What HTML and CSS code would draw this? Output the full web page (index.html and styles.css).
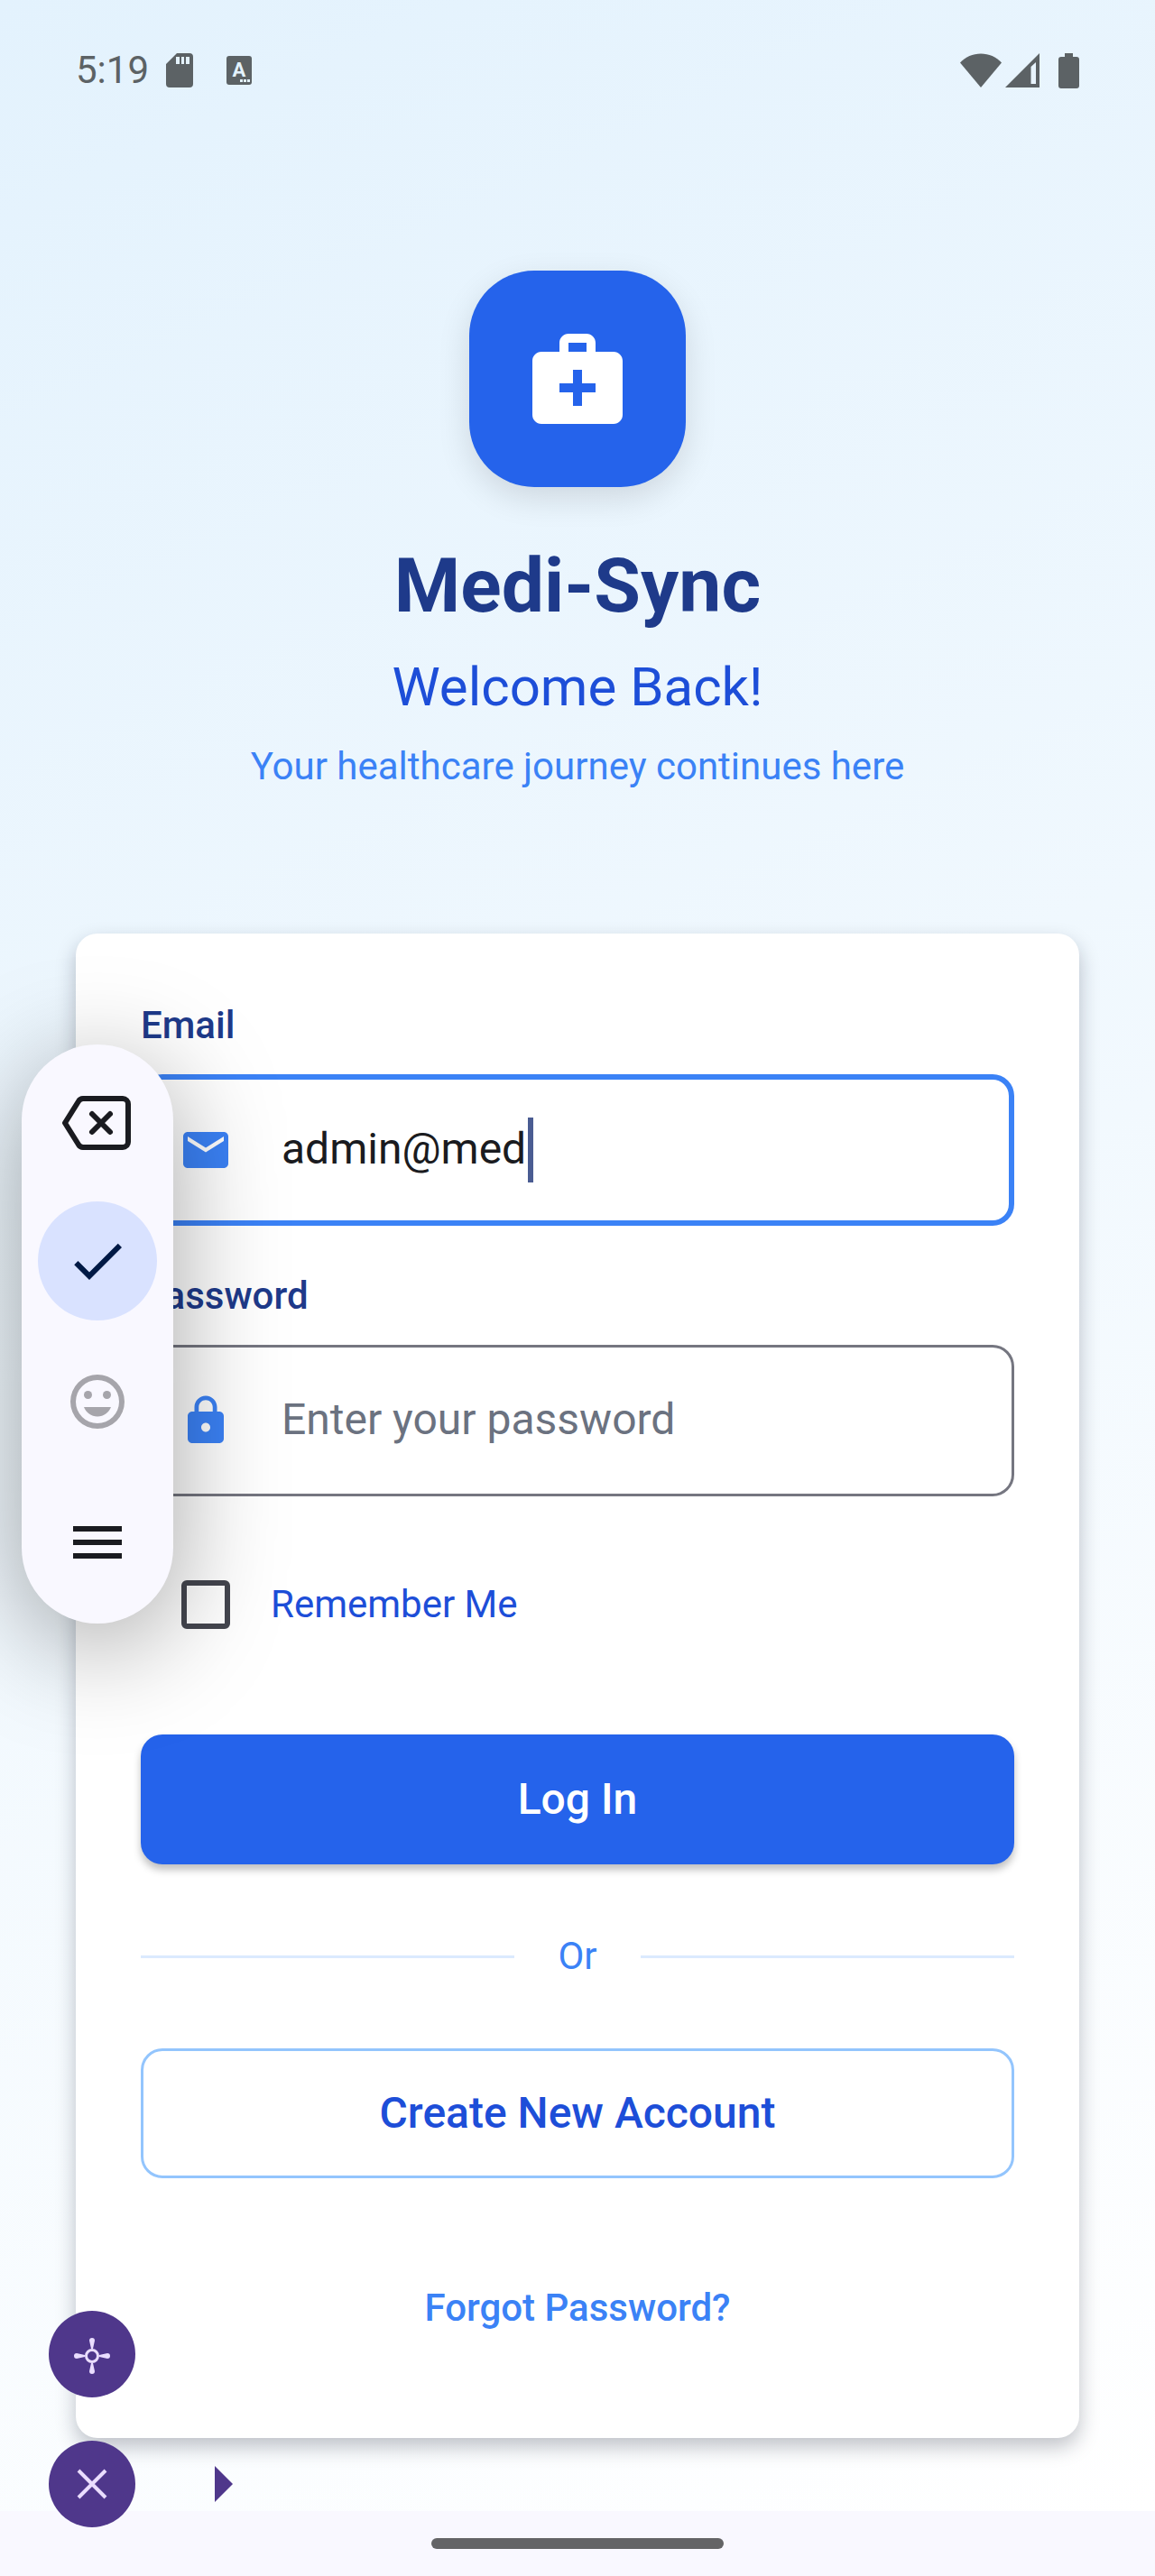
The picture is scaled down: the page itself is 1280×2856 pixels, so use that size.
FILE: index.html
```html
<!DOCTYPE html>
<html lang="en">
<head>
<meta charset="utf-8">
<meta name="viewport" content="width=device-width, initial-scale=1">
<title>Medi-Sync – Log In</title>
<link rel="stylesheet" href="styles.css">
</head>
<body>
<div class="screen">
  <header class="status-bar">
    <div class="status-group">
      <time class="clock">5:19</time>
      <svg class="status-sd" viewBox="0 0 30 38" aria-hidden="true"><path fill-rule="evenodd" d="M12 0H26a4 4 0 0 1 4 4V34a4 4 0 0 1-4 4H4a4 4 0 0 1-4-4V12ZM11 4V12H15V4ZM17 4V12H20V4ZM22 4V12H26V4Z"/></svg>
      <svg class="status-lang" viewBox="0 0 28 32" aria-hidden="true"><rect width="28" height="32" rx="3"/><text class="status-letter" x="14" y="23" text-anchor="middle">A</text><path class="status-dots" d="M15 26h3v3h-3zM19 26h3v3h-3zM23 26h3v3h-3z"/></svg>
    </div>
    <div class="status-group status-group-end">
      <svg class="status-wifi" viewBox="0 0 46 38" aria-hidden="true"><path d="M0 10.500C6 4 14 .5 23 .5S40 4 46 10.500L23 38Z"/></svg>
      <svg class="status-signal" viewBox="0 0 38 38" aria-hidden="true"><path fill-rule="evenodd" d="M38 0V38H0ZM34 10L28.500 15V34H34Z"/></svg>
      <svg class="status-battery" viewBox="0 0 23 39" aria-hidden="true"><path d="M7 0H16V4H20a3 3 0 0 1 3 3V36a3 3 0 0 1-3 3H3a3 3 0 0 1-3-3V7a3 3 0 0 1 3-3H7Z"/></svg>
    </div>
  </header>

  <main class="content">
    <section class="brand">
      <div class="logo">
        <svg class="logo-icon" viewBox="0 0 24 24" aria-hidden="true"><path fill-rule="evenodd" d="M20 6H16V4c0-1.100-.9-2-2-2H10C8.900 2 8 2.900 8 4V6H4C2.900 6 2 6.900 2 8V20c0 1.100.9 2 2 2H20c1.100 0 2-.9 2-2V8c0-1.100-.9-2-2-2ZM10 4H14V6H10ZM16 15H13V18H11V15H8V13H11V10H13V13H16Z"/></svg>
      </div>
      <h1 class="brand-name">Medi-Sync</h1>
      <p class="brand-welcome">Welcome Back!</p>
      <p class="brand-tagline">Your healthcare journey continues here</p>
    </section>

    <form class="card">
      <div class="field-group">
        <label class="label" for="email">Email</label>
        <div class="field field-focused">
          <svg class="field-icon" viewBox="0 0 24 24" aria-hidden="true"><path d="M20 4H4c-1.100 0-1.990.9-1.990 2L2 18c0 1.100.9 2 2 2h16c1.100 0 2-.9 2-2V6c0-1.100-.9-2-2-2zm0 4l-8 5-8-5V6l8 5 8-5v2z"/></svg>
          <input class="input input-sized" id="email" type="text" value="admin@med">
          <span class="caret"></span>
        </div>
      </div>
      <div class="field-group">
        <label class="label" for="password">Password</label>
        <div class="field">
          <svg class="field-icon" viewBox="0 0 24 24" aria-hidden="true"><path d="M18 8h-1V6c0-2.760-2.240-5-5-5S7 3.240 7 6v2H6c-1.100 0-2 .9-2 2v10c0 1.100.9 2 2 2h12c1.100 0 2-.9 2-2V10c0-1.100-.9-2-2-2zm-6 9c-1.100 0-2-.9-2-2s.9-2 2-2 2 .9 2 2-.9 2-2 2zm3.100-9H8.900V6c0-1.710 1.390-3.100 3.100-3.100s3.100 1.390 3.100 3.100v2z"/></svg>
          <input class="input" id="password" type="password" placeholder="Enter your password">
        </div>
      </div>
      <div class="remember">
        <span class="remember-target"><input class="checkbox" id="remember" type="checkbox"></span>
        <label class="remember-label" for="remember">Remember Me</label>
      </div>
      <div class="actions">
        <button class="button button-primary" type="submit">Log In</button>
        <div class="divider"><span class="divider-text">Or</span></div>
        <button class="button button-outline" type="button">Create New Account</button>
        <a class="forgot" href="#">Forgot Password?</a>
      </div>
    </form>
  </main>
</div>

<footer class="nav-bar"><div class="nav-handle"></div></footer>

<aside class="toolbar" aria-label="Keyboard toolbar">
  <button class="tool" type="button" aria-label="Backspace">
    <svg class="tool-icon tool-icon-wide" viewBox="0 0 80 72"><g transform="translate(0 9)"><path class="stroke-round" d="M24 3H68a6 6 0 0 1 6 6V51a6 6 0 0 1-6 6H24a6 6 0 0 1-5-3L4 30L19 6a6 6 0 0 1 5-3Z"/><path class="stroke-round" d="M34 20L54 40M54 20L34 40"/></g></svg>
  </button>
  <button class="tool tool-active" type="button" aria-label="Done">
    <svg class="tool-icon" viewBox="0 0 24 24"><path d="M9 16.170L4.830 12l-1.420 1.410L9 19 21 7l-1.410-1.410z"/></svg>
  </button>
  <button class="tool tool-muted" type="button" aria-label="Emoji">
    <svg class="tool-icon" viewBox="0 0 24 24"><path fill-rule="evenodd" d="M12 2a10 10 0 1 0 0 20a10 10 0 0 0 0-20ZM12 4a8 8 0 1 1 0 16a8 8 0 0 1 0-16Z"/><circle cx="8.500" cy="9.500" r="1.500"/><circle cx="15.500" cy="9.500" r="1.500"/><path d="M7 14H17c-.8 2.100-2.700 3.500-5 3.500S7.800 16.100 7 14Z"/></svg>
  </button>
  <button class="tool" type="button" aria-label="Menu">
    <svg class="tool-icon" viewBox="0 0 24 24"><path d="M3 18h18v-2H3v2zm0-5h18v-2H3v2zm0-7v2h18V6H3z"/></svg>
  </button>
</aside>

<aside class="assist" aria-label="Pointer controls">
  <button class="assist-button" type="button" aria-label="Move">
    <svg class="assist-icon" viewBox="0 -2 40 40"><path d="M19 12L17 3a3 3 0 0 1 6 0L21 12ZM19 28L17 37a3 3 0 0 0 6 0L21 28ZM12 19L3 17a3 3 0 0 0 0 6L12 21ZM28 19L37 17a3 3 0 0 1 0 6L28 21Z"/><circle class="assist-ring" cx="20" cy="20" r="6.500"/></svg>
  </button>
  <div class="assist-row">
    <button class="assist-button" type="button" aria-label="Close">
      <svg class="assist-icon" viewBox="0 0 40 40"><path class="assist-cross" d="M5 5L35 35M35 5L5 35"/></svg>
    </button>
    <button class="assist-expand" type="button" aria-label="Expand">
      <svg class="assist-arrow" viewBox="0 0 20 40"><path d="M0 0L20 20L0 40Z"/></svg>
    </button>
  </div>
</aside>
</body>
</html>
```
FILE: styles.css
```css
*,
*::before,
*::after {
  box-sizing: border-box;
}

body {
  position: relative;
  display: flex;
  flex-direction: column;
  min-height: 100vh;
  margin: 0;
  font-family: Roboto, "Liberation Sans", sans-serif;
  font-size: 42px;
  line-height: 60px;
}

button,
input {
  margin: 0;
  padding: 0;
  border: 0;
  background: none;
  font: inherit;
}

svg {
  display: block;
  flex: none;
  overflow: visible;
  fill: currentColor;
}

.screen {
  flex: 1;
  background: linear-gradient(155deg, #e3f2fd, #ffffff);
}

/* Status bar */
.status-bar {
  display: flex;
  align-items: center;
  justify-content: space-between;
  height: 156px;
  padding: 0 84px;
  color: #5c6265;
}

.status-group {
  display: flex;
  align-items: center;
}

.status-group-end {
  gap: 4px;
}

.status-sd {
  width: 30px;
  height: 38px;
  margin-left: 19px;
}

.status-lang {
  width: 28px;
  height: 32px;
  margin-left: 37px;
}

.status-letter {
  fill: #e3f2fd;
  font-size: 22px;
  font-weight: 700;
}

.status-dots {
  fill: #e3f2fd;
}

.status-wifi {
  width: 46px;
  height: 38px;
}

.status-signal {
  width: 38px;
  height: 38px;
}

.status-battery {
  width: 23px;
  height: 39px;
  margin-left: 17px;
}

/* Brand */
.content {
  padding: 144px 84px 81px;
}

.brand {
  display: flex;
  flex-direction: column;
  align-items: center;
  gap: 16px;
  text-align: center;
}

.logo {
  display: grid;
  place-items: center;
  width: 240px;
  height: 240px;
  margin-bottom: 40px;
  border-radius: 72px;
  background: #2563eb;
  color: #ffffff;
  box-shadow: 0 12px 36px rgba(0, 0, 0, 0.12);
}

.logo-icon {
  width: 120px;
  height: 120px;
}

.brand-name {
  margin: 0;
  color: #1e3a8a;
  font-size: 84px;
  font-weight: 700;
  line-height: 108px;
}

.brand-welcome {
  margin: 0;
  color: #1d4ed8;
  font-size: 60px;
  line-height: 84px;
}

.brand-tagline {
  margin: 0;
  color: #3b82f6;
}

/* Card */
.card {
  display: flex;
  flex-direction: column;
  gap: 48px;
  margin-top: 155px;
  padding: 72px;
  border-radius: 24px;
  background: #ffffff;
  box-shadow: 0 10px 22px rgba(15, 23, 42, 0.26);
}

.field-group {
  display: flex;
  flex-direction: column;
  gap: 24px;
}

.label {
  color: #1e3a8a;
  font-weight: 500;
}

.field {
  display: flex;
  align-items: center;
  height: 168px;
  padding: 0 42px;
  border-radius: 24px;
  box-shadow: inset 0 0 0 3px #757680;
}

.field-focused {
  box-shadow: inset 0 0 0 6px #3b82f6;
}

.field-icon {
  width: 60px;
  height: 60px;
  margin-right: 54px;
  color: #3b82f6;
}

.input {
  flex: 1;
  min-width: 0;
  height: 72px;
  padding-bottom: 4px;
  outline: 0;
  color: #1a1b20;
  font-size: 48px;
}

.input::placeholder {
  color: #6b7280;
  opacity: 1;
}

.input-sized {
  flex: none;
  field-sizing: content;
}

.caret {
  width: 6px;
  height: 72px;
  margin-left: 2px;
  background: #4a5c92;
}

.remember {
  display: flex;
  align-items: center;
  height: 144px;
}

.remember-target {
  display: grid;
  place-items: center;
  width: 144px;
  height: 144px;
}

.checkbox {
  appearance: none;
  width: 54px;
  height: 54px;
  border: 6px solid #44464f;
  border-radius: 6px;
}

.remember-label {
  color: #1d4ed8;
}

.actions {
  display: flex;
  flex-direction: column;
  gap: 72px;
  padding-top: 24px;
}

.button {
  height: 144px;
  border-radius: 24px;
  font-size: 48px;
  font-weight: 500;
}

.button-primary {
  background: #2563eb;
  color: #ffffff;
  box-shadow: 0 6px 9px rgba(0, 0, 0, 0.25);
}

.button-outline {
  border: 3px solid #93c5fd;
  color: #1d4ed8;
}

.divider {
  display: flex;
  align-items: center;
  gap: 48px;
  color: #3b82f6;
}

.divider::before,
.divider::after {
  content: "";
  flex: 1;
  height: 3px;
  background: #dbeafe;
}

.forgot {
  display: flex;
  align-items: center;
  justify-content: center;
  height: 144px;
  color: #3b82f6;
  font-weight: 500;
  text-decoration: none;
}

/* Gesture navigation */
.nav-bar {
  display: grid;
  place-items: center;
  height: 72px;
  background: #f9f8ff;
}

.nav-handle {
  width: 324px;
  height: 12px;
  border-radius: 6px;
  background: #646466;
}

/* Floating keyboard toolbar */
.toolbar {
  position: absolute;
  top: 1158px;
  left: 24px;
  display: flex;
  flex-direction: column;
  align-items: center;
  gap: 24px;
  width: 168px;
  padding: 18px 0 24px;
  border-radius: 84px;
  background: #f9f8ff;
  box-shadow: 0 24px 120px rgba(0, 0, 0, 0.36);
}

.tool {
  display: grid;
  place-items: center;
  width: 132px;
  height: 132px;
  border-radius: 50%;
  color: #1a1b20;
}

.tool-active {
  background: #d9e2ff;
  color: #001945;
}

.tool-muted {
  color: #a6a5ab;
}

.tool-icon {
  width: 72px;
  height: 72px;
}

.tool-icon-wide {
  width: 80px;
}

.stroke-round {
  fill: none;
  stroke: currentColor;
  stroke-width: 6;
  stroke-linecap: round;
  stroke-linejoin: round;
}

/* Floating pointer controls */
.assist {
  position: absolute;
  bottom: 54px;
  left: 54px;
  display: flex;
  flex-direction: column;
  gap: 48px;
}

.assist-row {
  display: flex;
  align-items: center;
  gap: 88px;
}

.assist-button {
  display: grid;
  place-items: center;
  width: 96px;
  height: 96px;
  border-radius: 50%;
  background: #4f378b;
  color: #eaddff;
}

.assist-icon {
  width: 40px;
  height: 40px;
}

.assist-ring {
  fill: none;
  stroke: currentColor;
  stroke-width: 3;
}

.assist-cross {
  stroke: currentColor;
  stroke-width: 4;
}

.assist-expand {
  color: #4f378b;
}

.assist-arrow {
  width: 20px;
  height: 40px;
}
```
